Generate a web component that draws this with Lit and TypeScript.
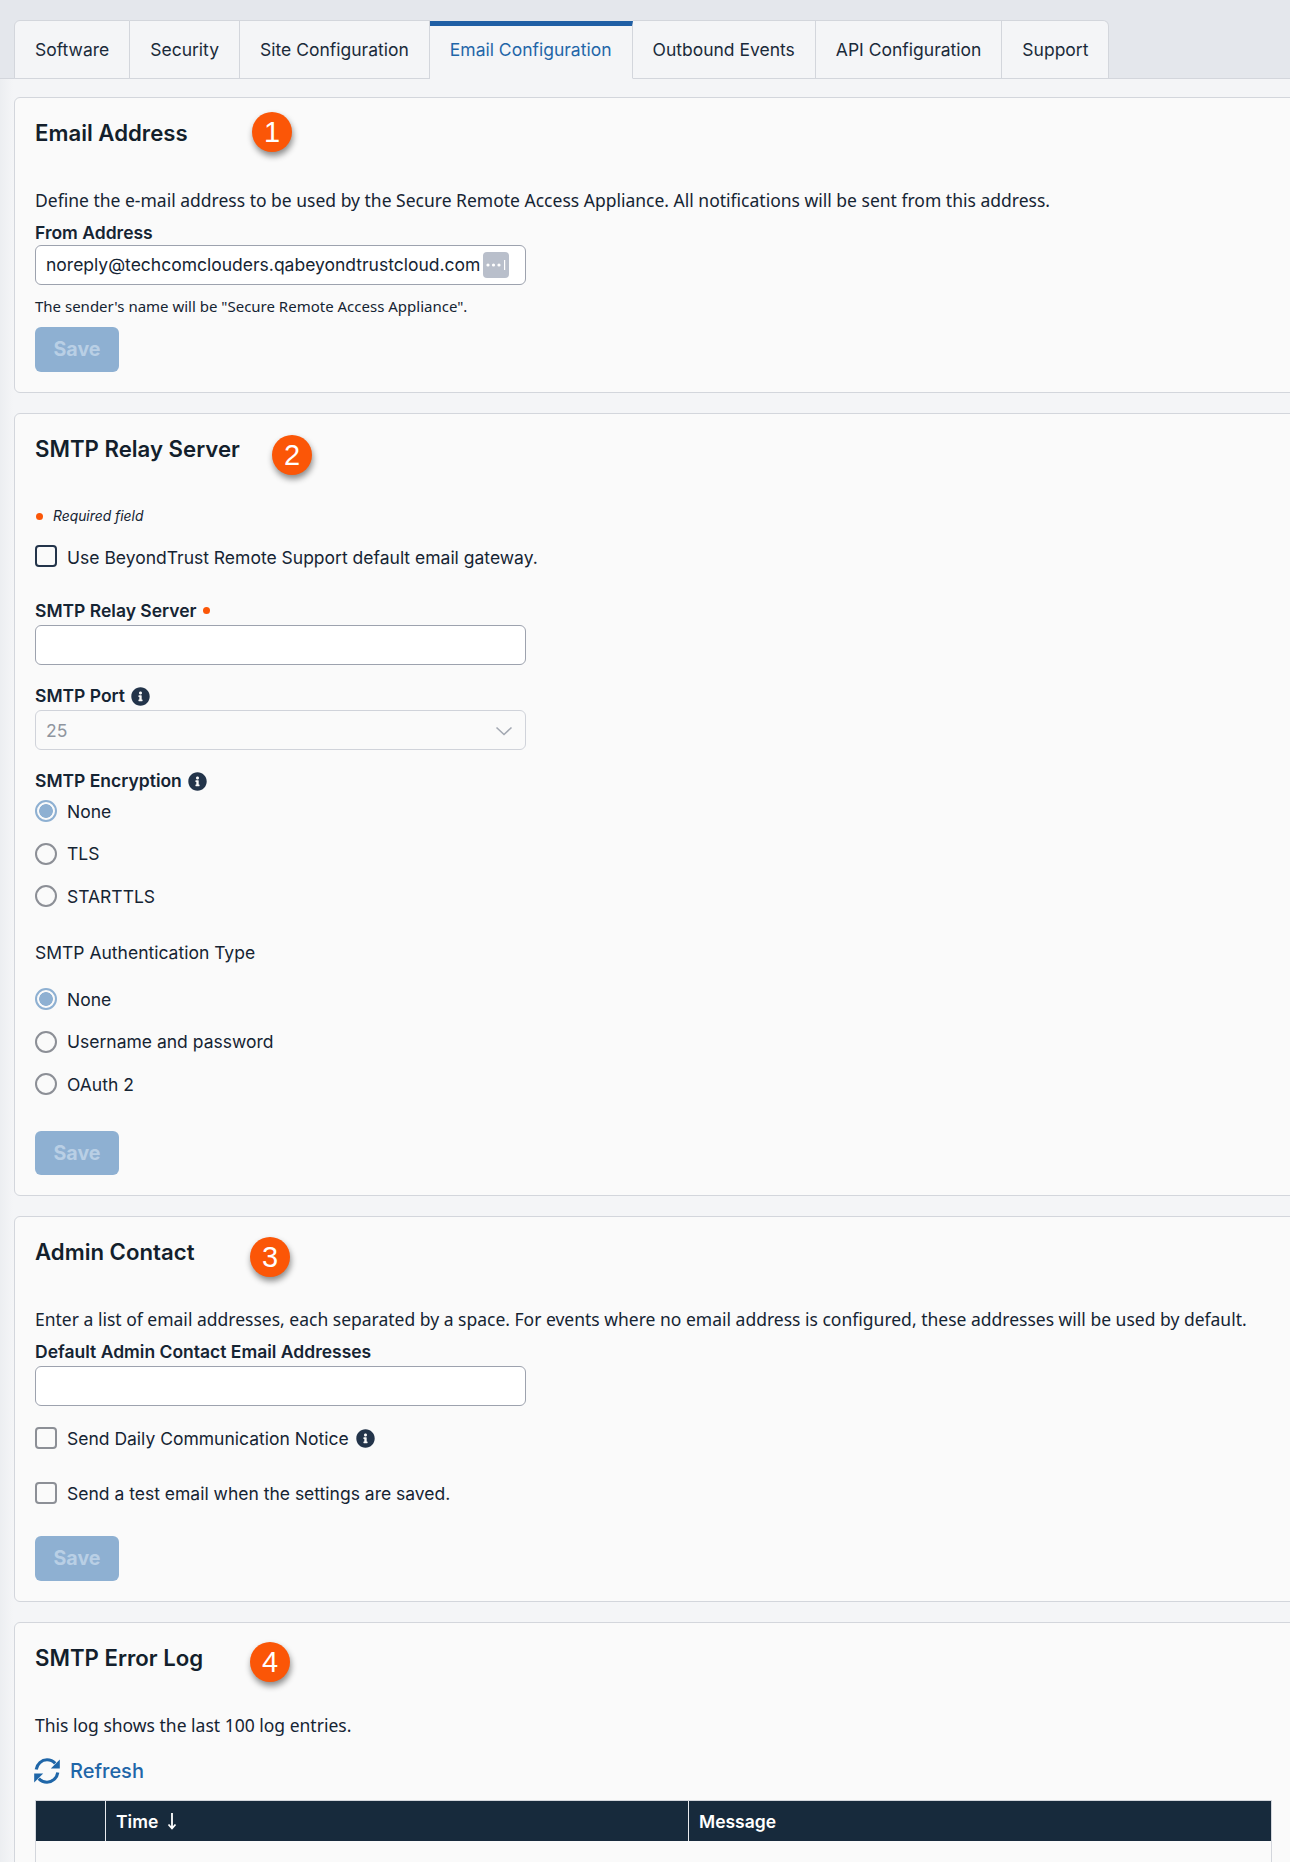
import { LitElement, html, css, svg } from "lit";
import { customElement } from "lit/decorators.js";

const INFO = "M256 8C119.043 8 8 119.083 8 256c0 136.997 111.043 248 248 248s248-111.003 248-248C504 119.083 392.957 8 256 8zm0 110c23.196 0 42 18.804 42 42s-18.804 42-42 42-42-18.804-42-42 18.804-42 42-42zm56 254c0 6.627-5.373 12-12 12h-88c-6.627 0-12-5.373-12-12v-24c0-6.627 5.373-12 12-12h12v-64h-12c-6.627 0-12-5.373-12-12v-24c0-6.627 5.373-12 12-12h64c6.627 0 12 5.373 12 12v100h12c6.627 0 12 5.373 12 12v24z";

const info = () => html`<svg class="info" viewBox="0 0 512 512"><path fill="#23344a" d=${INFO}></path></svg>`;

const TABS = ["Software", "Security", "Site Configuration", "Email Configuration", "Outbound Events", "API Configuration", "Support"];

@customElement("app-root")
export class AppRoot extends LitElement {
  static styles = css`
    :host {
      display: block;
      width: 1290px;
      height: 1862px;
      overflow: hidden;
      background: linear-gradient(to right, #eceef1, #f4f5f7 13px);
      font-family: Inter, "Noto Sans", sans-serif;
      font-size: 17.5px;
      color: #152433;
    }
    * { box-sizing: border-box; }
    .tabbar {
      display: flex;
      height: 79px;
      padding: 20px 0 0 14px;
      background: #e4e7ec;
      border-bottom: 1px solid #d3d6dc;
    }
    .tab {
      display: flex;
      align-items: center;
      height: 59px;
      padding: 0 20px;
      background: #f4f5f7;
      border: 1px solid #d3d6dc;
      border-left: 0;
      font-size: 17.5px;
      color: #1a2a3a;
      white-space: nowrap;
    }
    .tab:first-child { border-left: 1px solid #d3d6dc; border-top-left-radius: 6px; }
    .tab:last-child { border-top-right-radius: 6px; }
    .tab.active {
      border-top: 5px solid #1f5fa5;
      border-bottom-color: #f4f5f7;
      color: #1f66a8;
      padding-bottom: 5px;
      margin-top: 1px;
      height: 58px;
    }
    main { padding: 18px 0 0 14px; }
    .panel {
      position: relative;
      margin: 0 -10px 20px 0;
      padding: 0 27px 20px 20px;
      background: #fafafa;
      border: 1px solid #d3d6dc;
      border-radius: 6px;
    }
    h2 {
      margin: 21px 0 0;
      font-size: 22.2px;
      line-height: 28px;
      font-weight: 600;
      color: #131f2c;
    }
    .badge {
      position: absolute;
      width: 40px;
      height: 40px;
      border-radius: 50%;
      background: #fb5607;
      color: #fff;
      font-family: "Liberation Sans", Arial, sans-serif;
      font-size: 29px;
      line-height: 40px;
      text-align: center;
      box-shadow: 1px 4px 6px rgba(0, 0, 0, 0.45);
    }
    .desc {
      margin: 42px 0 0;
      padding-bottom: 2px;
      font-family: "Noto Sans", sans-serif;
      font-size: 17.5px;
      line-height: 22px;
      color: #152433;
    }
    .label {
      display: flex;
      align-items: center;
      gap: 6px;
      height: 20px;
      padding-bottom: 2px;
      font-weight: 600;
      font-size: 17.5px;
      color: #152433;
    }
    .info { width: 19px; height: 19px; flex: none; display: block; }
    .label .info { margin-bottom: -2px; }
    .plain { font-weight: 400; }
    .input {
      display: block;
      width: 491px;
      height: 40px;
      padding: 0 10px 2px;
      border: 1px solid #9da2ae;
      border-radius: 6px;
      background: #fff;
      font: inherit;
      color: #152433;
      outline: none;
    }
    .wrap { position: relative; width: 491px; }
    .wrap .input { padding-right: 44px; }
    .dots {
      position: absolute;
      right: 17px;
      top: 7px;
      width: 26px;
      height: 26px;
      display: block;
    }
    .select {
      display: flex;
      align-items: center;
      justify-content: space-between;
      width: 491px;
      height: 40px;
      padding: 0 12px 0 10px;
      border: 1px solid #d0d3da;
      border-radius: 6px;
      color: #8f959f;
      background: #fafafa;
    }
    .select svg { width: 18px; height: 10px; display: block; margin-top: 2px; }
    .help {
      margin: 12px 0 0;
      padding-bottom: 2px;
      font-family: "Noto Sans", sans-serif;
      font-size: 15px;
      line-height: 18px;
    }
    .save {
      display: block;
      width: 84px;
      height: 45px;
      border: 0;
      border-radius: 6px;
      background: #8eb0d2;
      color: #b9cfe5;
      font: 700 19.6px Inter, sans-serif;
      padding: 0 0 1px;
    }
    .save.short { height: 44px; }
    .req {
      display: flex;
      align-items: center;
      height: 20px;
      margin-top: 43px;
      font-style: italic;
      font-size: 13.85px;
    }
    .dot {
      display: inline-block;
      width: 7px;
      height: 7px;
      border-radius: 50%;
      background: #fb5607;
      flex: none;
    }
    .req .dot { margin: 0 10px 0 1px; }
    .row {
      display: flex;
      align-items: center;
      gap: 10px;
      height: 22px;
    }
    .row .info { margin-left: -3px; }
    .low span { padding-top: 2px; }
    .box {
      appearance: none;
      width: 22px;
      height: 22px;
      margin: 0;
      flex: none;
      border: 2px solid #8c8f96;
      border-radius: 4px;
      background: #fafafa;
    }
    .box.dark { border-color: #23344a; }
    .radio {
      appearance: none;
      width: 22px;
      height: 22px;
      margin: 0;
      flex: none;
      border: 2px solid #8c8f96;
      border-radius: 50%;
      background: #fafafa;
    }
    .radio.on {
      border-color: #8eb0d2;
      background: radial-gradient(circle, #8eb0d2 0, #8eb0d2 6.5px, #fafafa 7.2px);
    }
    .radios { display: flex; flex-direction: column; gap: 20.5px; }
    .refresh {
      display: flex;
      align-items: center;
      gap: 9px;
      height: 28px;
      margin: 19px 0 0 -2px;
      color: #1f66a8;
      font-family: Inter, sans-serif;
      font-weight: 500;
      font-size: 20px;
    }
    .refresh svg { width: 28px; height: 28px; display: block; }
    .table {
      margin: 15px 0 0;
      border-top: 1px solid #d3d6dc;
      border-left: 1px solid #d3d6dc;
      border-right: 1px solid #d3d6dc;
      height: 80px;
    }
    .thead {
      display: grid;
      grid-template-columns: 69px 583px 1fr;
      height: 40px;
      background: #172a3c;
      color: #fff;
      font-family: Inter, sans-serif;
      font-weight: 600;
      font-size: 17.5px;
    }
    .th {
      display: flex;
      align-items: center;
      gap: 9px;
      padding-left: 10px;
      border-left: 1px solid #e8eaee;
    }
    .th:first-child { border-left: 0; }
    .th svg { width: 10px; height: 18px; display: block; }

    .mt2 { margin-top: 2px; }
    .mt4 { margin-top: 4px; }
    .mt9 { margin-top: 9px; }
    .mt10 { margin-top: 10px; }
    .mt19 { margin-top: 19px; }
    .mt21 { margin-top: 21px; }
    .mt25 { margin-top: 25px; }
    .mt32 { margin-top: 32px; }
    .mt33 { margin-top: 33px; }
    .mt34 { margin-top: 34px; }
    .mt36 { margin-top: 36px; }
    .b1 { left: 237px; top: 14px; }
    .b2 { left: 257px; top: 21px; }
    .b3 { left: 235px; top: 20px; }
    .b4 { left: 235px; top: 19px; }
    .h4 { margin-top: 21px; }
  `;

  private radio(label: string, on = false) {
    return html`<label class="row"><input class="radio ${on ? "on" : ""}" type="radio" ?checked=${on} disabled /><span>${label}</span></label>`;
  }

  render() {
    return html`
      <nav class="tabbar">
        ${TABS.map((t) => html`<div class="tab ${t === "Email Configuration" ? "active" : ""}">${t}</div>`)}
      </nav>
      <main>
        <section class="panel">
          <h2>Email Address</h2>
          <span class="badge b1">1</span>
          <p class="desc">Define the e-mail address to be used by the Secure Remote Access Appliance. All notifications will be sent from this address.</p>
          <div class="label mt10">From Address</div>
          <div class="wrap mt2">
            <input class="input" value="noreply@techcomclouders.qabeyondtrustcloud.com" />
            <svg class="dots" viewBox="0 0 26 26">
              <rect width="26" height="26" rx="4" fill="#b9bfcb"></rect>
              ${svg`<circle cx="5" cy="13" r="1.6" fill="#fff"></circle><circle cx="10.5" cy="13" r="1.6" fill="#fff"></circle><circle cx="16" cy="13" r="1.6" fill="#fff"></circle><rect x="21" y="8" width="1.2" height="10" fill="#fff"></rect>`}
            </svg>
          </div>
          <p class="help">The sender's name will be "Secure Remote Access Appliance".</p>
          <button class="save mt10" disabled>Save</button>
        </section>

        <section class="panel">
          <h2>SMTP Relay Server</h2>
          <span class="badge b2">2</span>
          <div class="req"><span class="dot"></span>Required field</div>
          <label class="row low mt19"><input class="box dark" type="checkbox" /><span>Use BeyondTrust Remote Support default email gateway.</span></label>
          <div class="label mt34">SMTP Relay Server <span class="dot"></span></div>
          <input class="input mt4" />
          <div class="label mt21">SMTP Port ${info()}</div>
          <div class="select mt4">25
            <svg viewBox="0 0 18 10"><path d="M1.5 1.5 9 8.5l7.5-7" fill="none" stroke="#a3a8b2" stroke-width="1.6"></path></svg>
          </div>
          <div class="label mt21">SMTP Encryption ${info()}</div>
          <div class="radios mt9">
            ${this.radio("None", true)}${this.radio("TLS")}${this.radio("STARTTLS")}
          </div>
          <div class="label plain mt36">SMTP Authentication Type</div>
          <div class="radios mt25">
            ${this.radio("None", true)}${this.radio("Username and password")}${this.radio("OAuth 2")}
          </div>
          <button class="save short mt36" disabled>Save</button>
        </section>

        <section class="panel">
          <h2>Admin Contact</h2>
          <span class="badge b3">3</span>
          <p class="desc">Enter a list of email addresses, each separated by a space. For events where no email address is configured, these addresses will be used by default.</p>
          <div class="label mt10">Default Admin Contact Email Addresses</div>
          <input class="input mt4" />
          <label class="row mt21"><input class="box" type="checkbox" /><span>Send Daily Communication Notice</span> ${info()}</label>
          <label class="row mt33"><input class="box" type="checkbox" /><span>Send a test email when the settings are saved.</span></label>
          <button class="save mt32" disabled>Save</button>
        </section>

        <section class="panel">
          <h2 class="h4">SMTP Error Log</h2>
          <span class="badge b4">4</span>
          <p class="desc">This log shows the last 100 log entries.</p>
          <div class="refresh">
            <svg viewBox="0 0 28 28">
              <path d="M3.2 12.5C4 7 8.6 2.8 14 2.8c3.2 0 6.1 1.3 8.2 3.6" fill="none" stroke="#1f66a8" stroke-width="3.1"></path>
              <path d="M26.8 2.5v9H17.8z" fill="#1f66a8"></path>
              <path d="M24.8 15.5C24 21 19.4 25.2 14 25.2c-3.2 0-6.1-1.3-8.2-3.6" fill="none" stroke="#1f66a8" stroke-width="3.1"></path>
              <path d="M1.2 25.5v-9h9z" fill="#1f66a8"></path>
            </svg>
            Refresh
          </div>
          <div class="table">
            <div class="thead">
              <div class="th"></div>
              <div class="th">Time
                <svg viewBox="0 0 10 18"><path d="M5 1v15M1.5 12.5 5 16.5l3.5-4" fill="none" stroke="#fff" stroke-width="1.8"></path></svg>
              </div>
              <div class="th">Message</div>
            </div>
          </div>
        </section>
      </main>
    `;
  }
}
